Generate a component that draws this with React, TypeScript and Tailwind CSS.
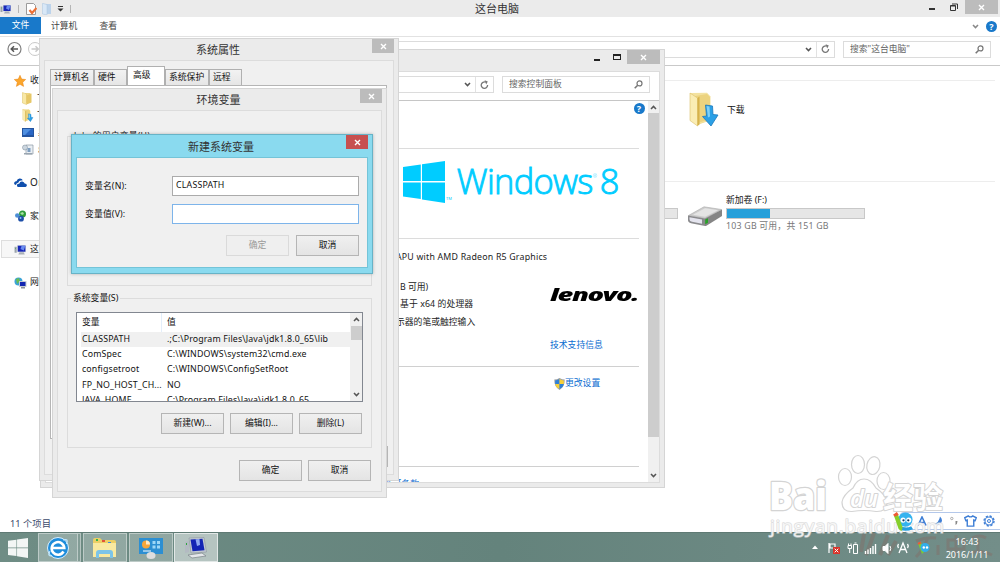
import React from 'react';

interface WindowProps {
  title?: string;
  frame: string;
  titleBar: string;
  children: React.ReactNode;
  active?: boolean;
}

interface Variable {
  name: string;
  value: string;
}

const variables: Variable[] = [
  { name: 'CLASSPATH', value: '.;C:\\Program Files\\Java\\jdk1.8.0_65\\lib' },
  { name: 'ComSpec', value: 'C:\\WINDOWS\\system32\\cmd.exe' },
  { name: 'configsetroot', value: 'C:\\WINDOWS\\ConfigSetRoot' },
  { name: 'FP_NO_HOST_CH...', value: 'NO' },
  { name: 'JAVA_HOME', value: 'C:\\Program Files\\Java\\jdk1.8.0_65' },
];

const CloseGlyph = () => (
  <svg width="7" height="7" viewBox="0 0 7 7" stroke="#fff" strokeWidth="1.4">
    <path d="M1 1l5 5M6 1l-5 5" />
  </svg>
);

const Chevron: React.FC<{ up?: boolean; color?: string }> = ({ up, color = '#555' }) => (
  <svg width="7" height="5" viewBox="0 0 7 5" fill="none" stroke={color} strokeWidth="1.5">
    <path d={up ? 'M1 4l2.5-2.6L6 4' : 'M1 1l2.5 2.6L6 1'} />
  </svg>
);

const RefreshIcon = () => (
  <svg width="9" height="10" viewBox="0 0 9 10" fill="none" stroke="#777" strokeWidth="1.3">
    <path d="M5.6 2.2a3.2 3.2 0 1 0 2 2.9" />
    <path d="M4.6.2l3.2 1.3-1.6 2.9z" fill="#777" stroke="none" />
  </svg>
);

const SearchIcon = () => (
  <svg width="9" height="9" viewBox="0 0 9 9" fill="none" stroke="#777" strokeWidth="1.2">
    <circle cx="5.5" cy="3.4" r="2.5" />
    <path d="M3.7 5.2L.7 8.2" strokeWidth="1.6" />
  </svg>
);

const HelpIcon = () => (
  <span className="flex size-[11px] items-center justify-center rounded-full bg-[#1979ca] text-[9px] font-bold leading-none text-white">
    ?
  </span>
);

const SmallFolderIcon = () => (
  <svg width="12" height="13" viewBox="0 0 12 13">
    <path d="M3 1h5.500v10H3z" fill="#eed583" />
    <path d="M.5.500l4 1.500v10.500l-4-1.500z" fill="#f8e8a6" stroke="#ddc062" strokeWidth=".5" />
    <path d="M4.500 3.500l5-2v9l-5 2z" fill="#e6c767" />
  </svg>
);

const DownloadFolderIcon: React.FC<{ width: number; height: number }> = ({ width, height }) => (
  <svg width={width} height={height} viewBox="0 0 31 35">
    <path d="M1 1l20 3.500v24L8 33z" fill="#eed98c" />
    <path d="M2 1l16-.2 3.500 3.700v23.500L9 32z" fill="#f3e2a0" />
    <path d="M6 4l12-2 3 3v22L9 31z" fill="#ecd37f" />
    <path d="M1 1l7.500 5v28L1 28.500z" fill="#faedb4" stroke="#dcc069" strokeWidth=".6" />
    <path d="M8.500 6l2-1.500v28l-2 1.500z" fill="#d6b24a" />
    <path d="M16.500 13l7 1 .5 8.500 5 .5-7 11-8.500-9.500 4-.5z" fill="#2ba0e6" stroke="#1b78bd" strokeWidth=".8" />
    <path d="M17.500 14l3 .5.5 10-2 1z" fill="#7fd0f7" />
  </svg>
);

const ComputerIcon: React.FC<{ size: number }> = ({ size }) => (
  <svg width={size} height={size} viewBox="0 0 24 24">
    <path d="M1 7h4v11H1z" fill="#9aa3ab" />
    <path d="M2 9h1v2H2z" fill="#3fb53f" />
    <path d="M6 4h16v13H6z" fill="#c9cfd6" />
    <path d="M7 5h14v11H7z" fill="#1726b8" />
    <path d="M14 5h7l-3 9-6-3z" fill="#6a8cf0" />
    <path d="M10 17h8l2 4H8z" fill="#aab0b7" />
  </svg>
);

const DriveIcon = () => (
  <svg width="35" height="21" viewBox="0 0 35 21">
    <path d="M.5 9.500L16 .8l17.500 2.700L17 12.500z" fill="#cdcdcd" stroke="#aaa" strokeWidth=".6" />
    <path d="M5 8.800l12-6.500 13 2-13 6.500z" fill="#e4e4e4" />
    <path d="M0 9.500l17 3V20L3 17.300Q0 16.500 0 14z" fill="#8a8a8d" />
    <path d="M1.500 11.300l12.500 2.200v4.200L4 15.800q-2.500-.5-2.500-2.500z" fill="#e4e4ee" />
    <path d="M17 12.500L34 3.500V10L18 20h-1z" fill="#858585" />
    <path d="M17.200 13.500l2.800-1.200v4.400l-2.800 1.600z" fill="#29a329" />
  </svg>
);

const WindowsLogo: React.FC<{ size: number; color: string }> = ({ size, color }) => (
  <svg width={size} height={size} viewBox="0 0 42 42" fill={color}>
    <path d="M0 6L17.800 3.500V20H0zM19 3.300L42 0v20H19zM0 21.500h17.800V38L0 35.500zM19 21.500h23V42l-23-3.500z" />
  </svg>
);

const ShieldIcon = () => (
  <svg width="11" height="12" viewBox="0 0 11 12">
    <path d="M5.500 0Q8 1.500 10.700 1.500 11 8.500 5.500 12 0 8.500.3 1.500 3 1.500 5.500 0z" fill="#9a9fa5" />
    <path d="M5.500 1Q3.500 2.300 1.200 2.400V6h4.300z" fill="#2f80d8" />
    <path d="M5.500 1q2 1.300 4.300 1.400V6H5.500z" fill="#f7d038" />
    <path d="M1.200 6q.6 3.300 4.300 5V6z" fill="#f7d038" />
    <path d="M9.800 6q-.6 3.300-4.300 5V6z" fill="#2f80d8" />
  </svg>
);

const Mascot: React.FC<{ size: number }> = ({ size }) => (
  <svg width={size} height={size} viewBox="0 0 22 20">
    <path d="M7 14q6 4 12 1l2 3q-7 3-13 1z" fill="#249fe0" />
    <circle cx="13" cy="8" r="7.500" fill="#35b3ef" />
    <path d="M1 4l4-2 5 14-1 4-3-2z" fill="#86cf2c" />
    <path d="M0 3l4-3 2 3-4 2z" fill="#ee5a35" />
    <circle cx="10.500" cy="8.500" r="2.700" fill="#fff" />
    <circle cx="16.500" cy="8.500" r="2.700" fill="#fff" />
    <circle cx="11" cy="8.800" r="1.200" fill="#123a66" />
    <circle cx="16" cy="8.800" r="1.200" fill="#123a66" />
  </svg>
);

const Window: React.FC<WindowProps> = ({ title, frame, titleBar, children, active }) => (
  <section
    className={`absolute flex flex-col border ${frame} ${
      active ? 'border-[#67b3c7] bg-[#8adaef] shadow-[0_0_3px_#8889]' : 'border-[#d5d5d5] bg-[#ebebeb]'
    }`}
  >
    <header className={`relative flex shrink-0 items-center justify-center pr-[2px] text-[11px] text-[#333] ${titleBar}`}>
      {title}
      <button
        className={`absolute top-0 right-1 flex h-[14px] w-[22px] items-center justify-center ${
          active ? 'bg-[#c75050]' : 'bg-[#bcbcbc]'
        }`}
      >
        <CloseGlyph />
      </button>
    </header>
    {children}
  </section>
);

const Button: React.FC<{ children: React.ReactNode; disabled?: boolean }> = ({ children, disabled }) => (
  <button
    className={`flex h-[21px] w-[63px] shrink-0 items-center justify-center border ${
      disabled
        ? 'border-[#dadada] bg-[#efefef] text-[#999]'
        : 'border-[#b5b5b5] bg-linear-to-b from-[#f0f0f0] to-[#e4e4e4] text-[#111]'
    }`}
  >
    {children}
  </button>
);

const AddressRow: React.FC<{ placeholder: string; box: string }> = ({ placeholder, box }) => (
  <>
    <div className="flex h-[17px] flex-1 items-center justify-end border border-[#dcdcdc] bg-white">
      <span className="pr-1">
        <Chevron />
      </span>
      <span className="flex h-full w-[18px] items-center justify-center border-l border-[#e2e2e2]">
        <RefreshIcon />
      </span>
    </div>
    <div className={`flex h-[17px] items-center justify-between border border-[#dcdcdc] bg-white px-1.5 text-[#666] ${box}`}>
      {placeholder}
      <SearchIcon />
    </div>
  </>
);

const Sidebar = () => (
  <nav className="w-[200px] shrink-0 pt-[5px] text-[#222]">
    <div className="flex h-[19px] items-center gap-[4px] pl-[14px]">
      <svg width="12" height="12" viewBox="0 0 12 12">
        <path d="M6 .3l1.700 3.800 4 .4-3 2.800.9 4.100L6 9.300l-3.600 2.100.9-4.100-3-2.800 4-.4z" fill="#fba62c" stroke="#e98212" strokeWidth=".5" />
      </svg>
      收藏夹
    </div>
    <div className="flex h-[17px] items-center gap-[3px] pl-[22px]">
      <SmallFolderIcon />
      下载
    </div>
    <div className="flex h-[17px] items-center gap-[3px] pl-[22px]">
      <DownloadFolderIcon width={12} height={13} />
      下载
    </div>
    <div className="flex h-[17px] items-center gap-[3px] pl-[22px]">
      <svg width="12" height="9" viewBox="0 0 12 9">
        <path d="M0 0h12v9H0z" fill="#24549e" />
        <path d="M1 1h10v6H1z" fill="#2a66c4" />
        <path d="M1 1h8L3 7H1z" fill="#4f8fe0" />
      </svg>
      <span className="pl-px">桌面</span>
    </div>
    <div className="flex h-[17px] items-center gap-[3px] pl-[22px]">
      <svg width="12" height="11" viewBox="0 0 12 11">
        <path d="M4 1h7v9H4z" fill="#e9eef3" stroke="#8d99a5" strokeWidth=".7" />
        <circle cx="3" cy="3.500" r="2.500" fill="#ccd6df" stroke="#8795a2" strokeWidth=".6" />
        <path d="M5.500 4h3v4h-3z" fill="#7f9fc0" />
        <path d="M2 9h8v1.500H2z" fill="#9aa6b1" />
      </svg>
      <span className="pl-px">最近访问的位置</span>
    </div>
    <div className="mt-[15px] flex h-[18px] items-center gap-[3px] pl-[14px]">
      <svg width="13" height="9" viewBox="0 0 13 9" fill="#0f4fad">
        <path d="M2 7Q-.5 6.500.3 4.500 1 3.200 2.500 3.300 3.500.2 6 .5q2 0 2.800 1.700Q5 2.200 4.500 4.500 2 5 2 7z" />
        <path d="M4 9Q2.500 8.500 3 6.800q.7-1.300 2.200-1Q6 3.200 8.200 3.400q2 .2 2.500 2.200 2.300.2 2.200 2Q12.500 9 11.500 9z" />
      </svg>
      <span className="text-[10px] tracking-[0.500px]">OneDrive</span>
    </div>
    <div className="mt-4 flex h-[18px] items-center gap-[3px] pl-[14px]">
      <svg width="13" height="12" viewBox="0 0 13 12">
        <circle cx="8.500" cy="4" r="3.500" fill="#2f9b3b" />
        <circle cx="3.300" cy="5.500" r="2.300" fill="#4d8fd6" />
        <circle cx="7" cy="8.700" r="2.900" fill="#1d4fa8" />
        <path d="M6 3l3-1 1 2-2 1z" fill="#a8e3a4" />
        <circle cx="6.500" cy="8" r="1" fill="#8cc0f2" />
      </svg>
      家庭组
    </div>
    <div className="mt-[15px] ml-px flex h-[18px] items-center gap-[3px] border border-[#dedede] bg-[#f7f7f7] pl-[12px]">
      <ComputerIcon size={13} />
      这台电脑
    </div>
    <div className="mt-4 flex h-[17px] items-center gap-[3px] pl-[14px]">
      <svg width="13" height="12" viewBox="0 0 13 12">
        <circle cx="4.500" cy="4.500" r="4" fill="#3aa3d8" />
        <path d="M2 2l3-1 1 3-3 3z" fill="#68bb52" />
        <path d="M5 4h7.500v6H5z" fill="#c6ccd3" />
        <path d="M6 5h5.500v4H6z" fill="#1226b2" />
        <path d="M7 10h4v1.500H7z" fill="#8b939b" />
      </svg>
      网络
    </div>
  </nav>
);

const Explorer = () => (
  <main className="flex h-[532px] flex-col bg-white">
    <header className="flex h-[17px] shrink-0 items-start bg-[#ebebeb] text-[#333]">
      <div className="flex h-[17px] w-[200px] items-center gap-1.5">
        <ComputerIcon size={12} />
        <span className="h-2 w-px bg-[#b5b5b5]" />
        <svg width="11" height="12" viewBox="0 0 11 12" className="ml-px">
          <path d="M.5.500h7l2 2v9h-9z" fill="#fff" stroke="#9b9b9b" />
          <path d="M3.500 7l2.500 3L10.500 5" fill="none" stroke="#ef7135" strokeWidth="2.200" />
        </svg>
        <svg width="10" height="12" viewBox="0 0 10 12" className="-ml-px">
          <path d="M3 1h6v10H3z" fill="#bcd3eb" />
          <path d="M.5.300L5 1.500V12L.5 11z" fill="#d9e8f7" stroke="#a9c4df" strokeWidth=".5" />
        </svg>
        <svg width="7" height="6" viewBox="0 0 7 6" fill="#333" className="-ml-px">
          <path d="M1 0h5v1H1zM.5 2.500h6L3.500 5.500z" />
        </svg>
        <span className="h-2 w-px bg-[#b5b5b5]" />
      </div>
      <h1 className="flex h-[17px] flex-1 items-center justify-center pr-[6px] text-[11px]">这台电脑</h1>
      <div className="flex w-[200px] items-start justify-end">
        <span className="mt-2 mr-[15px] h-[1.5px] w-[6px] bg-[#333]" />
        <svg width="8" height="8" viewBox="0 0 8 8" className="mt-[3px] mr-[7px]" fill="none" stroke="#333">
          <path d="M.5 2.500h5v5h-5zM2 1h5.500v5" />
          <path d="M.5 3h5" />
        </svg>
        <span className="mr-[2px] flex h-[14px] w-[33px] items-center justify-center bg-[#bcbcbc]">
          <CloseGlyph />
        </span>
      </div>
    </header>
    <div className="flex h-5 shrink-0 items-center border-b border-[#e2e2e2] text-[#444]">
      <span className="flex h-[17px] w-[41px] items-center justify-center self-start bg-[#1979ca] text-white">文件</span>
      <span className="ml-[10px]">计算机</span>
      <span className="ml-[22px]">查看</span>
      <span className="mr-[7px] ml-auto">
        <Chevron color="#888" />
      </span>
      <span className="mr-[3px]">
        <HelpIcon />
      </span>
    </div>
    <div className="flex h-[29px] shrink-0 items-center gap-[8px] border-b border-[#c9c9c9] pr-[9px] pb-[4px]">
      <svg width="40" height="16" viewBox="0 0 40 16" fill="none" className="ml-[6px]">
        <circle cx="8.500" cy="8" r="6.500" stroke="#808080" strokeWidth="1.200" />
        <path d="M12 8H5.500M8 5.200L5.200 8 8 10.800" stroke="#555" strokeWidth="1.500" />
        <circle cx="29" cy="8" r="6.500" stroke="#c9c9c9" />
        <path d="M25.500 8H32M29.500 5.200L32.300 8l-2.800 2.800" stroke="#c9c9c9" strokeWidth="1.500" />
      </svg>
      <AddressRow placeholder={'搜索"这台电脑"'} box="w-[148px]" />
    </div>
    <div className="flex min-h-0 flex-1">
      <Sidebar />
      <div className="flex-1 pt-[14px] pr-[5px] pl-[400px]">
        <div className="flex h-[102px] items-start border-y border-[#ededed] pt-[11px] pl-[89px]">
          <DownloadFolderIcon width={31} height={35} />
          <span className="mt-[12px] ml-[7px] text-[#111]">下载</span>
        </div>
        <div className="flex pt-[12px]">
          <div className="mt-[14px] h-[11px] w-[78px] border border-[#c8c8c8] bg-[#e6e6e6]" />
          <div className="mt-[12px] ml-[10px]">
            <DriveIcon />
          </div>
          <div className="ml-[3px] leading-[13px]">
            <div className="text-[#111]">新加卷 (F:)</div>
            <div className="mt-px h-[11px] w-[139px] border border-[#c8c8c8] bg-[#e6e6e6]">
              <div className="h-full w-[43px] bg-[#26a0da]" />
            </div>
            <div className="pt-px tracking-[0.220px] text-[#777]">103 GB 可用，共 151 GB</div>
          </div>
        </div>
      </div>
    </div>
    <footer className="flex h-[17px] shrink-0 items-center pl-[10px] text-[9.3px] text-[#3c4a6b]">11 个项目</footer>
  </main>
);

const ControlPanel = () => (
  <Window frame="top-[49px] left-[40px] h-[439px] w-[625px]" titleBar="h-[21px]">
    <div className="absolute top-0 right-1 flex items-start">
      <span className="mt-[9px] mr-[13px] h-[1.5px] w-[6px] bg-[#222]" />
      <span className="mt-[4px] mr-[6px] h-[6px] w-[8px] border border-t-2 border-[#222]" />
      <span className="flex h-[14px] w-[33px] items-center justify-center bg-[#bcbcbc]">
        <CloseGlyph />
      </span>
    </div>
    <div className="mx-1 mb-1 flex min-h-0 flex-1 flex-col border border-[#dcdcdc] bg-white">
      <div className="flex h-[29px] shrink-0 items-center gap-[8px] border-b border-[#c6c6c6] pr-[9px] pb-[3px] pl-[80px]">
        <AddressRow placeholder="搜索控制面板" box="w-[148px]" />
      </div>
      <div className="flex min-h-0 flex-1">
        <div className="flex min-w-0 flex-1 flex-col overflow-hidden pr-[9px] pl-[341px] text-[#222]">
          <div className="flex h-[48px] shrink-0 items-start border-b border-[#dcdcdc]">
            <div className="w-full" />
            <div className="mt-[2px] -mr-[5.5px]">
              <HelpIcon />
            </div>
          </div>
          <div className="flex h-[90px] shrink-0 items-start border-b border-[#dcdcdc] pt-[12px] pl-[16px] text-[#00ccff]">
            <WindowsLogo size={42} color="#00ccff" />
            <span className="mt-[36px] ml-px text-[4px] leading-none">TM</span>
            <span className="mt-[-2px] ml-[5px] flex font-['Open_Sans'] text-[34.500px] leading-[44px] font-light tracking-[-0.700px] whitespace-nowrap [-webkit-text-stroke:0.9px_#00ccff]">
              Windows
              <span className="mt-[15px] text-[5px] leading-none tracking-normal [-webkit-text-stroke:0]">®</span>
              <span className="ml-[3px]">8</span>
            </span>
          </div>
          <div className="flex h-[128px] shrink-0 items-start justify-between border-b border-[#d0d0d0] pt-[10px]">
            <div className="pl-[9px] leading-[17.500px] whitespace-nowrap">
              <div className="tracking-[0.200px]">APU with AMD Radeon R5 Graphics</div>
              <div className="mt-[12px] pl-[4px]">B 可用)</div>
              <div className="pl-[4px] tracking-[0.100px]">基于 x64 的处理器</div>
              <div>示器的笔或触控输入</div>
            </div>
            <div className="flex w-[89px] shrink-0 flex-col items-start pt-[36px]">
              <div className="h-[20px] origin-left scale-x-[1.560] font-['Open_Sans'] text-[17.500px] leading-[18px] font-extrabold tracking-[-0.900px] text-black italic">
                lenovo.
              </div>
              <div className="mt-[34px] leading-[13px] text-[#0a6cd0]">技术支持信息</div>
            </div>
          </div>
          <div className="flex h-[100px] shrink-0 items-start border-b border-[#d0d0d0] pt-[10px] pl-[167px] text-[#0a6cd0]">
            <span className="flex items-center">
              <ShieldIcon />
              更改设置
            </span>
          </div>
          <div className="flex shrink-0 pt-[11px] text-[#0a6cd0]">
            <span className="-ml-20 w-[112px] text-right whitespace-nowrap">Microsoft 软件许可条款</span>
          </div>
        </div>
        <div className="flex w-[11px] flex-col items-center bg-[#f0f0f0]">
          <span className="flex h-[12px] items-center">
            <Chevron up />
          </span>
          <span className="h-[324px] w-full bg-[#cdcdcd]" />
          <span className="mt-auto flex h-[13px] items-center">
            <Chevron />
          </span>
        </div>
      </div>
    </div>
  </Window>
);

const SystemProperties = () => (
  <Window title="系统属性" frame="top-[38px] left-[39px] h-[443px] w-[360px]" titleBar="h-[21px]">
    <div className="mx-[4px] mb-[5px] flex flex-1 flex-col border border-[#dcdcdc] bg-[#f0f0f0] px-[5px] pt-[6px]">
      <div className="flex h-[18px] items-end text-[#111]">
        {['计算机名', '硬件', '高级', '系统保护', '远程'].map((tab) => (
          <span
            key={tab}
            className={`flex border border-b-0 border-[#b0b0b0] ${
              tab === '高级'
                ? 'h-[19px] w-[38px] items-center bg-white pb-[2px] pl-[5px]'
                : tab.length === 4
                ? 'h-4 w-[44px] items-center bg-linear-to-b from-[#f2f2f2] to-[#e6e6e6] pl-[3px]'
                : 'h-4 w-[33px] items-center bg-linear-to-b from-[#f2f2f2] to-[#e6e6e6] pl-[3px]'
            }`}
          >
            {tab}
          </span>
        ))}
      </div>
      <div className="h-[354px] w-[337px] border border-[#b5b5b5] bg-white" />
      <div className="mt-[7px] flex justify-end">
        <Button>应用(A)</Button>
      </div>
    </div>
  </Window>
);

const EnvironmentVariables = () => (
  <Window title="环境变量" frame="top-[88px] left-[52px] h-[410px] w-[335px]" titleBar="h-[21px]">
    <div className="mx-1 mb-[5px] flex flex-1 flex-col border border-[#dcdcdc] bg-[#f0f0f0] px-[9px] pt-[18px]">
      <fieldset className="h-[157px] border border-[#dcdcdc] px-[3px] leading-[14px] text-[#111]">
        <legend className="px-[3px] tracking-[0.200px]">lulu 的用户变量(U)</legend>
      </fieldset>
      <fieldset className="mt-[5px] h-[157px] border border-[#dcdcdc] px-[3px] text-[#111]">
        <legend className="px-[2px] leading-[14px]">系统变量(S)</legend>
        <div className="mt-[7px] ml-[5px] flex h-[90px] w-[287px] border border-[#828790] bg-white">
          <div className="flex-1 overflow-hidden pl-[4px]">
            <div className="flex h-[18.500px] items-center">
              <span className="h-full w-[81px] border-r border-[#e3eefa] pl-px leading-[18px]">变量</span>
              <span className="pl-[5px]">值</span>
            </div>
            {variables.map(({ name, value }, i) => (
              <div
                key={name}
                className={`flex h-[15.400px] items-center tracking-[0.150px] whitespace-nowrap ${i === 0 ? 'bg-[#f0f0f0]' : ''}`}
              >
                <span className="w-[86px] pl-px">{name}</span>
                <span>{value}</span>
              </div>
            ))}
          </div>
          <div className="flex w-[12px] flex-col items-center bg-[#f0f0f0]">
            <span className="flex h-[13px] items-center">
              <Chevron up />
            </span>
            <span className="h-[14px] w-[11px] bg-[#cdcdcd]" />
            <span className="mt-auto flex h-[13px] items-center">
              <Chevron />
            </span>
          </div>
        </div>
        <div className="mt-[11px] flex justify-end gap-[6px] pr-[6px]">
          <Button>新建(W)...</Button>
          <Button>编辑(I)...</Button>
          <Button>删除(L)</Button>
        </div>
      </fieldset>
      <div className="mt-[12px] flex justify-end gap-[6px] pr-px">
        <Button>确定</Button>
        <Button>取消</Button>
      </div>
    </div>
  </Window>
);

const NewVariable = () => (
  <Window title="新建系统变量" active frame="top-[134px] left-[71px] h-[140px] w-[302px]" titleBar="h-[22px]">
    <div className="mx-1 mb-[5px] flex flex-1 flex-col border border-[#74c4d8] bg-[#f0f0f0] pt-[18px] pr-[8px] pl-[8px] text-[#111]">
      <label className="flex h-[20px] items-center justify-between tracking-[0.150px]">
        变量名(N):
        <input
          readOnly
          value="CLASSPATH"
          className="h-[20px] w-[187px] border border-[#ababab] bg-white px-[3px] pb-[2px] tracking-[0.200px]"
        />
      </label>
      <label className="mt-[8px] flex h-[20px] items-center justify-between tracking-[0.150px]">
        变量值(V):
        <input className="h-[20px] w-[187px] border border-[#7db4ea] bg-white px-[3px]" />
      </label>
      <div className="mt-[11px] flex justify-end gap-[7px]">
        <Button disabled>确定</Button>
        <Button>取消</Button>
      </div>
    </div>
  </Window>
);

const ImeBar = () => (
  <div className="absolute top-[512px] left-[893px] flex h-[18px] w-[107px] items-center">
    <div className="z-10 mt-px">
      <Mascot size={21} />
    </div>
    <div className="-ml-[14px] flex h-[18px] flex-1 items-center justify-between rounded-l-sm border border-r-0 border-[#b4c8ea] bg-white pr-[5px] pl-[16px]">
      <svg width="10" height="10" viewBox="0 0 10 10" fill="none" stroke="#3f7fd6" strokeWidth="1.600">
        <path d="M1 9.500L5 1l4 8.500M2.500 6.500h5" />
      </svg>
      <svg width="10" height="10" viewBox="0 0 10 10" fill="#3f7fd6">
        <path d="M7 .5q4 4 0 7.500-3 2-6.500 0Q6 7 7 .5z" />
      </svg>
      <svg width="8" height="10" viewBox="0 0 8 10">
        <circle cx="1.800" cy="2.500" r="1.200" fill="none" stroke="#999" strokeWidth=".8" />
        <path d="M5.500 5h2q0 3-2 4z" fill="#888" />
      </svg>
      <svg width="13" height="12" viewBox="0 0 12 11" fill="none" stroke="#3f7fd6" strokeWidth="1.300">
        <path d="M4 .8q2 1.800 4 0l3.300 1.700-1 2.700-1.300-.5v5.500H3V4.700l-1.300.5-1-2.700z" />
      </svg>
      <svg width="12" height="12" viewBox="0 0 12 12" fill="none" stroke="#3f7fd6">
        <circle cx="6" cy="6" r="5" strokeWidth="1.400" strokeDasharray="2.200 1.727" />
        <circle cx="6" cy="6" r="4" strokeWidth="1.100" />
        <circle cx="6" cy="6" r="1.500" />
      </svg>
    </div>
  </div>
);

const Taskbar = () => (
  <footer className="relative flex h-[30px] items-stretch border-t border-[#5f7a74] bg-linear-to-r from-[#6f8d85] via-[#64837c] to-[#738e89] text-white">
    {/* wallpaper brush strokes showing through the translucent bar */}
    <svg className="absolute top-0 right-0 blur-[0.5px]" width="150" height="29" viewBox="0 0 150 29" fill="none" stroke="#8f5a52" strokeOpacity=".28">
      <path d="M14 1l-3 18M24 0q-4 12-8 22M38 2l-8 20M46 8l-8 14" strokeWidth="4" />
      <path d="M66 8q10-4 20-3M78 4q-4 12-12 20M88 12v10" strokeWidth="3" />
      <path d="M98 7h16v9H98zM106 2v22M122 5q8-4 14 0M128 6v12M120 20q10-4 22 2" strokeWidth="3" />
    </svg>
    <div className="flex w-[38px] items-center justify-center pr-0.5">
      <WindowsLogo size={20} color="#f3f6f5" />
    </div>
    <div className="flex w-[40px] items-center justify-center border border-white/40 bg-white/25">
      <svg width="24" height="24" viewBox="0 0 24 24" fill="none">
        <circle cx="12" cy="12" r="10.500" fill="#1f8ddb" stroke="#d8efff" />
        <path d="M17.500 15.500A6.300 6.300 0 1 1 18.300 12H7" stroke="#fff" strokeWidth="2.600" />
        <path d="M4 15Q1 21 6 19.500M17 4q6-2 3.500 4" stroke="#bfe7ff" strokeWidth="1.200" />
      </svg>
    </div>
    <div className="mr-[2px] w-[3px] border border-l-0 border-white/40 bg-white/15" />
    <div className="flex w-[44px] items-center justify-center border border-white/40 bg-white/25">
      <svg width="24" height="22" viewBox="0 0 24 22">
        <path d="M0 3q0-2 2-2h5l2 2h12q2 0 2 2v14H0z" fill="#eccf66" />
        <path d="M3 2h2v2H3z" fill="#35b44a" />
        <path d="M9 3h3v2H9z" fill="#e2523a" />
        <path d="M15 5h3v2h-3z" fill="#3a8be0" />
        <path d="M0 6h23v14H0z" fill="#f9e9a0" />
        <path d="M3 21v-5q0-3 3-3h11q3 0 3 3v5h-3v-4H6v4z" fill="#7cc4e8" />
      </svg>
    </div>
    <div className="ml-[2px] flex w-[44px] items-center justify-center border border-white/40 bg-white/25">
      <svg width="24" height="22" viewBox="0 0 24 22">
        <path d="M0 1h24v16H0z" fill="#2d8fd2" />
        <circle cx="7" cy="7.500" r="4" fill="#f7a63b" />
        <path d="M7 7.500V3.500a4 4 0 0 1 4 4z" fill="#ffe9c4" />
        <path d="M13.500 4h3v3h-3zM18 4h3v3h-3zM13.500 8.500h3v3h-3zM18 8.500h3v3h-3z" fill="#9ed7f7" />
        <path d="M4 14h8" stroke="#fff" />
        <ellipse cx="12" cy="18.500" rx="4.500" ry="3.500" fill="#dedede" />
      </svg>
    </div>
    <div className="ml-px flex w-[44px] items-center justify-center border border-white/60 bg-white/50">
      <svg width="24" height="22" viewBox="0 0 24 22">
        <path d="M1 5l4-1v11l-4 1z" fill="#b3bac2" />
        <path d="M2 6h1v2H2z" fill="#2ea83d" />
        <path d="M5 1l15-.5L22.500 15 7 16z" fill="#c3cad2" stroke="#8d959c" strokeWidth=".6" />
        <path d="M6.500 2.500l12-.7 2 11.500-12 .9z" fill="#1324b4" />
        <path d="M11.500 2.200l4-.2.500 6-3 1z" fill="#8fa9f2" />
        <path d="M4 18l14-2 4 3-14 2z" fill="#e4e7ea" stroke="#7a8288" strokeWidth=".7" />
      </svg>
    </div>
    <div className="relative ml-auto flex items-center">
      <svg width="120" height="14" viewBox="0 0 120 14" fill="none" stroke="#fff">
        <path d="M0 8l3-3.500L6 8z" fill="#fff" stroke="none" />
        <path d="M17 2v10M18 3h5v4h-5z" strokeWidth="1.200" />
        <path d="M21 6h7v7h-7z" fill="#d9342b" stroke="none" />
        <path d="M22.700 7.700l3.600 3.600M26.300 7.700l-3.600 3.600" />
        <path d="M41.500 3.500h4v9h-4z" />
        <path d="M42.500 2h2M36 4.500h3.500v3H36zM37.700 7.500V12M36.500 2.500v2M39 2.500v2" />
        <path d="M53.500 10v3M56 8.500V13M58.500 7v6M61 5v8M63.500 3v10" strokeWidth="1.400" />
        <path d="M71 5.500h2l3-3v10l-3-3h-2z" fill="#fff" />
        <path d="M78 5q1.500 2.500 0 5" />
        <path d="M87 12l4-10 4 10M88.500 8.500h5M86.500 3q-1.500 2 0 4M95.500 3q1.500 2 0 4" strokeWidth="1.300" />
        <path d="M106 2.500l3-1.500 3 10-2 2z" fill="#7ccb35" stroke="none" />
        <path d="M105.500 2l3-1.500.8 2-3 1.200z" fill="#ee5a35" stroke="none" />
        <circle cx="113" cy="6.500" r="4.500" fill="#31aeea" stroke="none" />
        <circle cx="111.800" cy="6.500" r="1.200" fill="#fff" stroke="none" />
        <circle cx="115" cy="6.500" r="1.200" fill="#fff" stroke="none" />
      </svg>
      <div className="mr-[5px] ml-[7px] w-[56px] text-center text-[9px] leading-[13px]">
        <div>16:43</div>
        <div>2016/1/11</div>
      </div>
    </div>
  </footer>
);

const Watermark = () => (
  <svg
    className="pointer-events-none absolute top-[450px] left-[760px]"
    width="200"
    height="100"
    viewBox="0 0 200 100"
    fill="#fff"
    stroke="#d4d4d4"
    strokeWidth="1.200"
    strokeLinejoin="round"
    fontFamily="'Open Sans', 'Noto Sans CJK SC', sans-serif"
  >
    <ellipse cx="85" cy="27" rx="6.500" ry="8.500" />
    <ellipse cx="98" cy="14.500" rx="6.500" ry="9" />
    <ellipse cx="113.500" cy="15.500" rx="6.500" ry="9" transform="rotate(12 113 15)" />
    <ellipse cx="123.500" cy="31" rx="6.500" ry="8.500" />
    <path d="M104 29q7 0 12 9 10 7 11 14 0 10-11 9.500-12-2-24 0Q82 62 82 52q1-7 11-14 4-9 11-9z" />
    <g strokeWidth="2.500" style={{ paintOrder: 'stroke' }}>
      <text x="9" y="60" fontSize="39" fontWeight="800" textLength="58" lengthAdjust="spacingAndGlyphs">
        Bai
      </text>
      <text x="123" y="58" fontSize="30" fontWeight="700" strokeWidth="2" textLength="60">
        经验
      </text>
      <text x="90" y="57" fontSize="23" fontStyle="italic" fontWeight="600" strokeWidth="2" textLength="28" lengthAdjust="spacingAndGlyphs">
        du
      </text>
    </g>
    <text x="10" y="83" fontSize="19" fillOpacity=".75" strokeOpacity=".75" strokeWidth="1.500" style={{ paintOrder: 'stroke' }} textLength="174">
      jingyan.baidu.com
    </text>
  </svg>
);

export default function App() {
  return (
    <div className="relative h-[562px] w-[1000px] overflow-hidden font-['Noto_Sans','Noto_Sans_CJK_SC',sans-serif] text-[8.800px] leading-[13px]">
      <Explorer />
      <Taskbar />
      <ControlPanel />
      <SystemProperties />
      <EnvironmentVariables />
      <NewVariable />
      <ImeBar />
      <Watermark />
    </div>
  );
}
